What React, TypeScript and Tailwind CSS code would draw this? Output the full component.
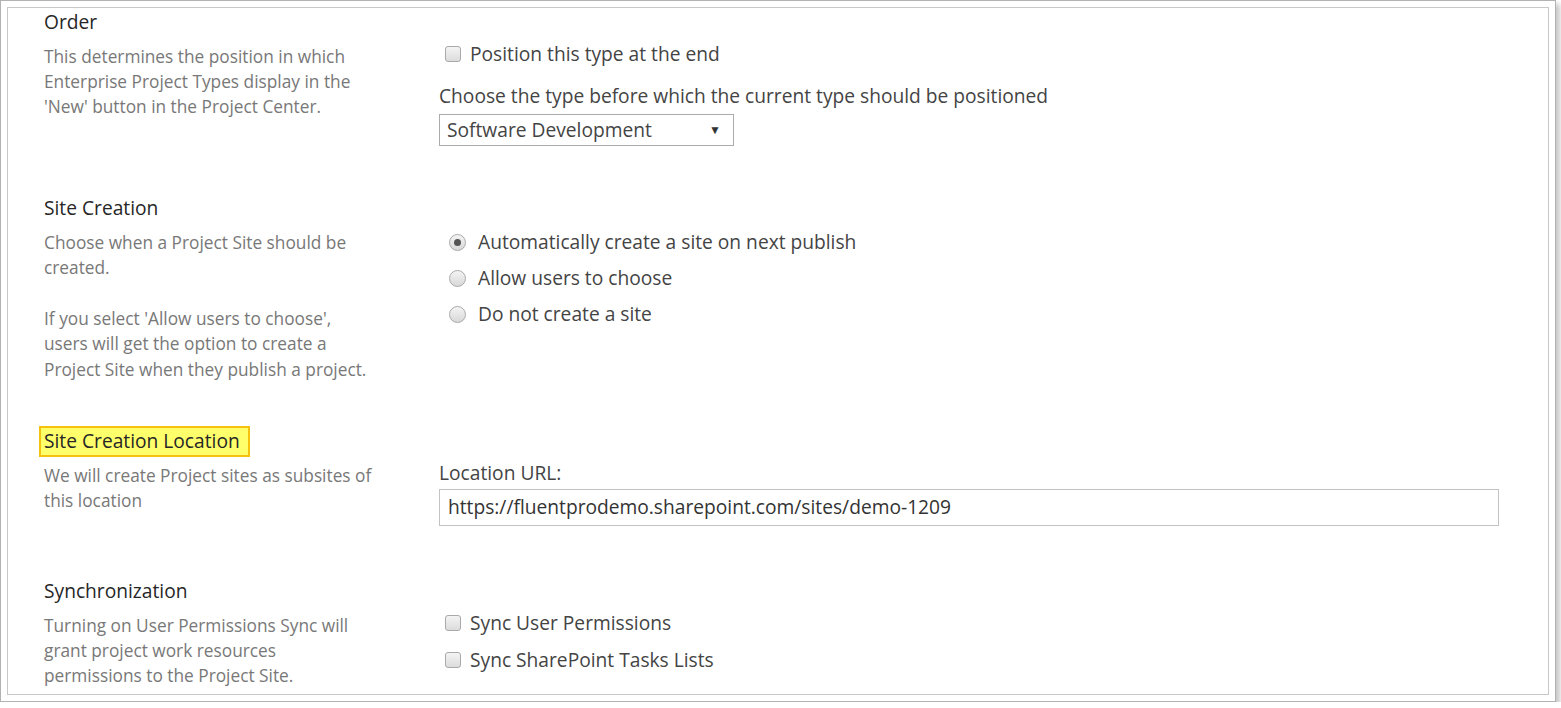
import React from "react";

const font = { fontFamily: '"Open Sans", "Noto Sans", "Liberation Sans", sans-serif' };

function Checkbox() {
  return (
    <span className="ml-[6px] mr-[9px] inline-block h-4 w-4 shrink-0 rounded-[3px] border border-[#a9a9a9] bg-gradient-to-b from-[#f4f4f4] to-[#dcdcdc]" />
  );
}

function Radio({ checked }: { checked?: boolean }) {
  return (
    <span className="ml-[10px] mr-[12px] flex h-[17px] w-[17px] shrink-0 items-center justify-center rounded-full border border-[#a9a9a9] bg-gradient-to-b from-[#f4f4f4] to-[#d8d8d8]">
      {checked && <span className="h-[7px] w-[7px] rounded-full bg-[#555]" />}
    </span>
  );
}

function Row({ children, className = "" }: { children: React.ReactNode; className?: string }) {
  return <div className={`flex h-[25px] items-center text-[#444] ${className}`}>{children}</div>;
}

function Section({
  title,
  highlight,
  desc,
  minH,
  rightPt,
  children,
}: {
  title: string;
  highlight?: boolean;
  desc: React.ReactNode;
  minH: string;
  rightPt: string;
  children: React.ReactNode;
}) {
  return (
    <div className={`grid grid-cols-[395px_1fr] ${minH}`}>
      <div>
        <div className="flex h-6 items-center text-[19.2px] text-[#262626]">
          {highlight ? (
            <span className="-ml-[5px] flex h-[31px] items-center border-2 border-[#f5c30f] bg-[#ffff6b] pl-[3px] pr-[8px]">
              {title}
            </span>
          ) : (
            title
          )}
        </div>
        <div className="mt-[9.5px] text-[17.3px] leading-[25.4px] text-[#787878]">{desc}</div>
      </div>
      <div className={rightPt}>{children}</div>
    </div>
  );
}

export default function App() {
  return (
    <div style={font} className="bg-white">
      <div className="flex h-[702px] w-[1556px] flex-col border border-[#b2b2b2] bg-white p-[6px] shadow-[4px_4px_5px_rgba(0,0,0,0.22)]">
        <div className="flex-1 border border-[#c8c8c8] pl-9 pt-[2px] text-[19.2px]">
          <Section
            title="Order"
            minH="min-h-[186px]"
            rightPt="pt-[31.5px]"
            desc={
              <>
                This determines the position in which
                <br />
                Enterprise Project Types display in the
                <br />
                'New' button in the Project Center.
              </>
            }
          >
            <Row>
              <Checkbox />
              Position this type at the end
            </Row>
            <Row className="mt-[17px]">Choose the type before which the current type should be positioned</Row>
            <div className="mt-[5.5px] flex h-[32px] w-[295px] items-center justify-between border border-[#ababab] pl-[7px] pr-[12px] text-[#444]">
              <span>Software Development</span>
              <span className="text-[12px] text-[#333]">▼</span>
            </div>
          </Section>

          <Section
            title="Site Creation"
            minH="min-h-[233px]"
            rightPt="pt-[33.5px]"
            desc={
              <>
                Choose when a Project Site should be
                <br />
                created.
                <br />
                <br />
                If you select 'Allow users to choose',
                <br />
                users will get the option to create a
                <br />
                Project Site when they publish a project.
              </>
            }
          >
            <div className="flex flex-col gap-[11px]">
              <Row>
                <Radio checked />
                Automatically create a site on next publish
              </Row>
              <Row>
                <Radio />
                Allow users to choose
              </Row>
              <Row>
                <Radio />
                Do not create a site
              </Row>
            </div>
          </Section>

          <Section
            title="Site Creation Location"
            highlight
            minH="min-h-[150px]"
            rightPt="pt-[31.5px]"
            desc={
              <>
                We will create Project sites as subsites of
                <br />
                this location
              </>
            }
          >
            <Row>Location URL:</Row>
            <div className="mt-[3.5px] flex h-[37px] w-[1060px] items-center border border-[#c3c3c3] pl-[8px] text-[#333]">
              https://fluentprodemo.sharepoint.com/sites/demo-1209
            </div>
          </Section>

          <Section
            title="Synchronization"
            minH="min-h-[110px]"
            rightPt="pt-[31.5px]"
            desc={
              <>
                Turning on User Permissions Sync will
                <br />
                grant project work resources
                <br />
                permissions to the Project Site.
              </>
            }
          >
            <div className="flex flex-col gap-[12px]">
              <Row>
                <Checkbox />
                Sync User Permissions
              </Row>
              <Row>
                <Checkbox />
                Sync SharePoint Tasks Lists
              </Row>
            </div>
          </Section>
        </div>
      </div>
    </div>
  );
}
